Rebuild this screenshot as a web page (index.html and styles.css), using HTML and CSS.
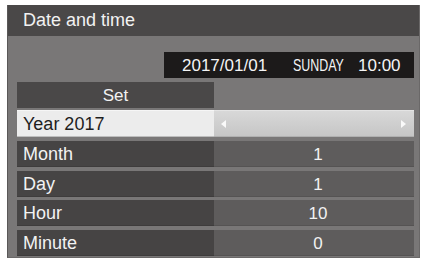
FILE: index.html
```html
<!DOCTYPE html>
<html>
<head>
<meta charset="utf-8">
<link rel="stylesheet" href="styles.css">
</head>
<body>
<div class="panel">
  <div class="title">Date and time</div>
  <div class="content">
    <div class="datebox">
      <span class="date">2017/01/01</span>
      <span class="day">SUNDAY</span>
      <span class="time">10:00</span>
    </div>
    <div class="setrow"><div class="set">Set</div></div>
    <div class="rows">
      <div class="row sel">
        <div class="lbl">Year 2017</div>
        <div class="val">
          <svg class="arr" width="6" height="8" viewBox="0 0 6 8"><path d="M5 0 L0 4 L5 8 Z" fill="#fafafa"/></svg>
          <svg class="arr" width="6" height="8" viewBox="0 0 6 8"><path d="M1 0 L6 4 L1 8 Z" fill="#fafafa"/></svg>
        </div>
      </div>
      <div class="row"><div class="lbl">Month</div><div class="val">1</div></div>
      <div class="row"><div class="lbl">Day</div><div class="val">1</div></div>
      <div class="row"><div class="lbl">Hour</div><div class="val">10</div></div>
      <div class="row"><div class="lbl">Minute</div><div class="val">0</div></div>
    </div>
  </div>
</div>
</body>
</html>
```

FILE: styles.css
```css
html, body {
  margin: 0;
  padding: 0;
  background: #ffffff;
}
body {
  font-family: "Liberation Sans", Arial, sans-serif;
  width: 426px;
  height: 262px;
  overflow: hidden;
}
.panel {
  margin: 5px 0 0 7px;
  width: 413px;
  height: 253px;
  background: #797777;
  box-sizing: border-box;
  border-left: 1px solid #5a5858;
  border-right: 1px solid #6a6868;
  border-bottom: 1px solid #6a6868;
  display: flex;
  flex-direction: column;
}
.title {
  height: 31px;
  flex: none;
  background: #4a4848;
  color: #f2f2f2;
  font-size: 18px;
  line-height: 31px;
  padding-left: 15px;
}
.content {
  display: flex;
  flex-direction: column;
  padding: 16px 5px 0 9px;
}
.datebox {
  align-self: flex-end;
  width: 250px;
  height: 26px;
  background: #1c1a1a;
  color: #f4f4f4;
  font-size: 17px;
  line-height: 27px;
  display: flex;
  align-items: center;
  box-sizing: border-box;
  padding-left: 18px;
}
.date {
  width: 111px;
}
.day {
  display: inline-block;
  transform: scaleX(0.73);
  transform-origin: left center;
  width: 65px;
}
.setrow {
  margin-top: 4px;
  height: 26px;
}
.set {
  width: 197px;
  height: 26px;
  background: #4a4848;
  color: #f2f2f2;
  font-size: 17px;
  line-height: 27px;
  text-align: center;
}
.rows {
  margin-top: 2px;
  display: flex;
  flex-direction: column;
  gap: 3.75px;
}
.row {
  display: flex;
  height: 26px;
}
.row.sel {
  height: 27px;
}
.lbl {
  width: 197px;
  background: #464444;
  color: #f2f2f2;
  font-size: 18px;
  line-height: 27px;
  padding-left: 6px;
  box-sizing: border-box;
  border-bottom: 1px solid #3e3c3c;
}
.val {
  flex: 1;
  background: #5e5c5c;
  color: #f2f2f2;
  font-size: 17px;
  line-height: 27px;
  text-align: center;
  padding-left: 8px;
  border-bottom: 1px solid #555353;
}
.sel .lbl {
  background: #ececec;
  color: #1e1e1e;
  border-bottom: 1px solid #bdbdbd;
  border-top: 1px solid #f6f6f6;
}
.sel .val {
  background: linear-gradient(#d8d8d8, #c6c6c6);
  display: flex;
  align-items: center;
  justify-content: space-between;
  padding: 0 8px 0 7px;
  border-bottom: 1px solid #b0b0b0;
  border-top: 1px solid #e4e4e4;
}
.arr {
  display: block;
}
```
